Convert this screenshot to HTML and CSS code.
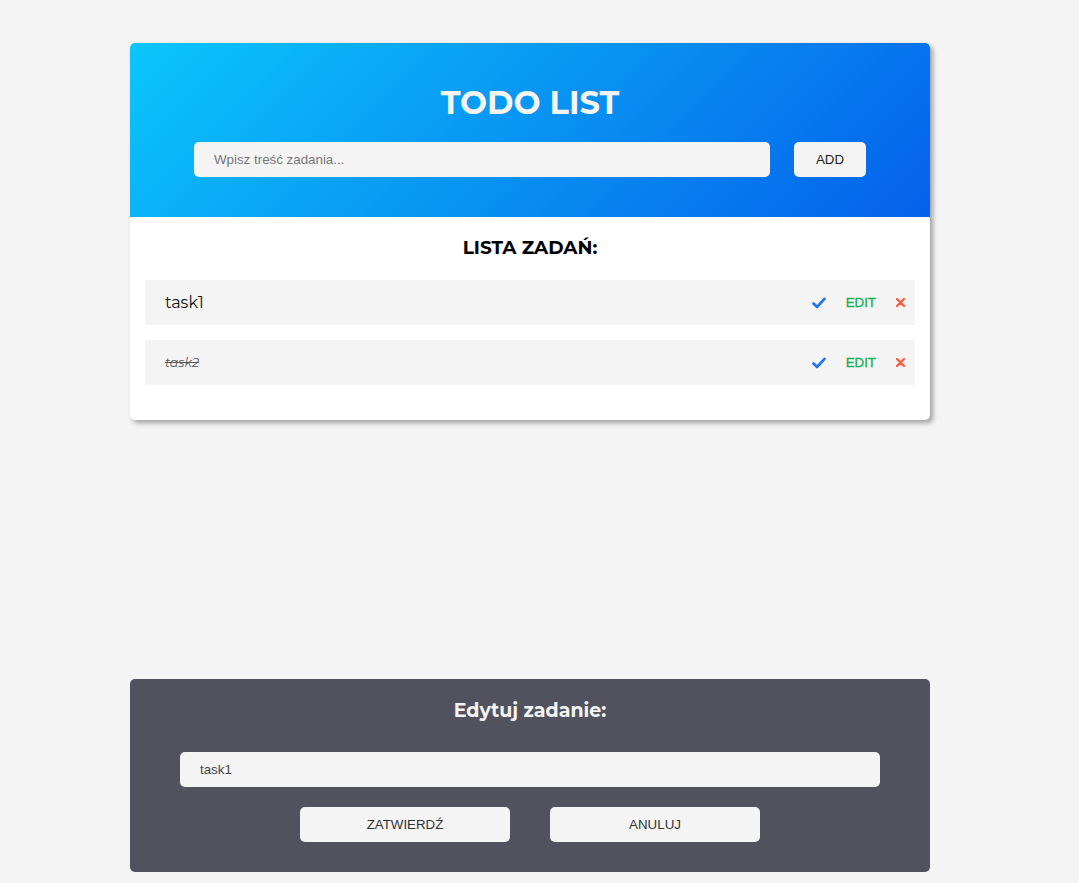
FILE: index.html
```html
<!DOCTYPE html>
<html>
<head>
    <title>Todo List</title>
    <link rel="stylesheet" href="styles.css">
</head>
<body>
    <div class="todo">
        <div class="header">
            <h1>TODO LIST</h1>
            <form class="add-form">
                <input type="text" class="add-input" placeholder="Wpisz treść zadania...">
                <button type="submit" class="add-btn">ADD</button>
            </form>
        </div>
        <div class="list">
            <h2>LISTA ZADAŃ:</h2>
            <ul>
                <li class="task">
                    <span class="task-name">task1</span>
                    <div class="actions">
                        <button class="done-btn">
                            <svg width="14" height="12" viewBox="0 0 14 12"><polyline points="1.5,6.5 5,10 12.5,1.8" fill="none" stroke="#1f74fb" stroke-width="2.6" stroke-linecap="round" stroke-linejoin="round"/></svg>
                        </button>
                        <button class="edit-btn">EDIT</button>
                        <button class="delete-btn">
                            <svg width="9" height="9" viewBox="0 0 9 9"><path d="M1 1 L8 8 M8 1 L1 8" stroke="#ff5b3d" stroke-width="2.3" stroke-linecap="round"/></svg>
                        </button>
                    </div>
                </li>
                <li class="task">
                    <span class="task-name done">task2</span>
                    <div class="actions">
                        <button class="done-btn">
                            <svg width="14" height="12" viewBox="0 0 14 12"><polyline points="1.5,6.5 5,10 12.5,1.8" fill="none" stroke="#1f74fb" stroke-width="2.6" stroke-linecap="round" stroke-linejoin="round"/></svg>
                        </button>
                        <button class="edit-btn">EDIT</button>
                        <button class="delete-btn">
                            <svg width="9" height="9" viewBox="0 0 9 9"><path d="M1 1 L8 8 M8 1 L1 8" stroke="#ff5b3d" stroke-width="2.3" stroke-linecap="round"/></svg>
                        </button>
                    </div>
                </li>
            </ul>
        </div>
    </div>

    <div class="popup">
        <h3>Edytuj zadanie:</h3>
        <input type="text" class="popup-input" value="task1">
        <div class="popup-buttons">
            <button class="popup-btn">ZATWIERDŹ</button>
            <button class="popup-btn">ANULUJ</button>
        </div>
    </div>
</body>
</html>
```

FILE: styles.css
```css
body {
    margin: 0;
    padding-right: 19px;
    background-color: #f4f4f4;
    font-family: Montserrat, "Open Sans", sans-serif;
}
.todo {
    width: 800px;
    margin: 43px auto 0;
    background-color: white;
    border-radius: 5px;
    box-shadow: 3px 3px 5px rgba(0, 0, 0, 0.35);
    overflow: hidden;
}
.header {
    height: 174px;
    box-sizing: border-box;
    padding-top: 42px;
    background: linear-gradient(135deg, #0bc6fb, #0560ea);
}
h1 {
    margin: 0 0 21px;
    font-size: 32px;
    line-height: 36px;
    font-weight: 700;
    color: #f4f4f4;
    text-align: center;
}
.add-form {
    display: flex;
    gap: 24px;
    padding: 0 64px;
}
.add-input, .add-btn, .popup-input, .popup-btn {
    height: 35px;
    box-sizing: border-box;
    border: none;
    border-radius: 5px;
    background-color: #f4f4f4;
    font-family: "Liberation Sans", Arial, sans-serif;
    font-size: 13.33px;
    color: #333;
    outline: none;
}
.add-input {
    flex: 1;
    padding: 0 20px;
}
.add-input::placeholder {
    color: #777;
}
.add-btn {
    width: 72px;
    color: #222;
    cursor: pointer;
}
.list {
    padding: 19px 15px 35px;
}
h2 {
    margin: 0 0 20px;
    font-size: 18.5px;
    line-height: 24px;
    font-weight: 700;
    text-align: center;
    color: #000;
}
ul {
    list-style: none;
    margin: 0;
    padding: 0;
    display: flex;
    flex-direction: column;
    gap: 15px;
}
.task {
    height: 45px;
    display: flex;
    align-items: center;
    justify-content: space-between;
    padding: 0 10px 0 20px;
    background-color: #f4f4f4;
}
.task-name {
    font-size: 16px;
    color: #111;
}
.task-name.done {
    font-size: 12.5px;
    font-style: italic;
    color: #555;
    text-decoration: line-through;
}
.actions {
    display: flex;
    align-items: center;
    gap: 20px;
}
.actions button {
    padding: 0;
    border: none;
    background: none;
    cursor: pointer;
    display: flex;
    align-items: center;
}
.edit-btn {
    font-family: "Liberation Sans", Arial, sans-serif;
    font-size: 13.33px;
    color: #14b04f;
    -webkit-text-stroke: 0.3px #14b04f;
}
.popup {
    width: 800px;
    margin: 259px auto 0;
    box-sizing: border-box;
    padding: 21px 50px 30px;
    background-color: #51525e;
    border-radius: 5px;
}
h3 {
    margin: 0 0 30px;
    font-size: 19px;
    line-height: 22px;
    font-weight: 700;
    color: #f4f4f4;
    text-align: center;
}
.popup-input {
    width: 100%;
    padding: 0 20px;
    color: #444;
}
.popup-buttons {
    display: flex;
    justify-content: center;
    gap: 40px;
    margin-top: 20px;
}
.popup-btn {
    width: 210px;
    cursor: pointer;
}
```
